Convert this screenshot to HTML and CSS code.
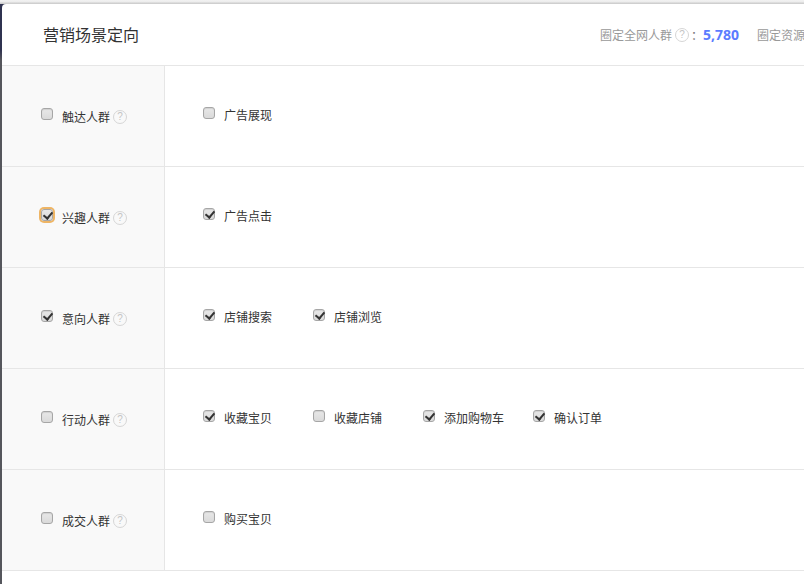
FILE: index.html
```html
<!DOCTYPE html>
<html lang="zh-CN">
<head>
  <meta charset="UTF-8">
  <title>营销场景定向</title>
  <link rel="stylesheet" href="styles.css">
</head>
<body>

<div class="modal">
  <div class="modal-head">
    <h2>营销场景定向</h2>
    <div class="stats">
      <span class="stat">圈定全网人群<i class="help">?</i><span class="colon">：</span><b>5,780</b></span>
      <span class="stat">圈定资源位人群</span>
    </div>
  </div>

  <div class="row">
    <div class="row-left">
      <label class="item"><span class="box"></span>触达人群</label><i class="help">?</i>
    </div>
    <div class="row-right">
      <label class="item"><span class="box"></span>广告展现</label>
    </div>
  </div>

  <div class="row">
    <div class="row-left">
      <label class="item"><span class="box checked focus"></span>兴趣人群</label><i class="help">?</i>
    </div>
    <div class="row-right">
      <label class="item"><span class="box checked"></span>广告点击</label>
    </div>
  </div>

  <div class="row">
    <div class="row-left">
      <label class="item"><span class="box checked"></span>意向人群</label><i class="help">?</i>
    </div>
    <div class="row-right">
      <label class="item"><span class="box checked"></span>店铺搜索</label>
      <label class="item"><span class="box checked"></span>店铺浏览</label>
    </div>
  </div>

  <div class="row">
    <div class="row-left">
      <label class="item"><span class="box"></span>行动人群</label><i class="help">?</i>
    </div>
    <div class="row-right">
      <label class="item"><span class="box checked"></span>收藏宝贝</label>
      <label class="item"><span class="box"></span>收藏店铺</label>
      <label class="item"><span class="box checked"></span>添加购物车</label>
      <label class="item"><span class="box checked"></span>确认订单</label>
    </div>
  </div>

  <div class="row">
    <div class="row-left">
      <label class="item"><span class="box"></span>成交人群</label><i class="help">?</i>
    </div>
    <div class="row-right">
      <label class="item"><span class="box"></span>购买宝贝</label>
    </div>
  </div>
</div>

</body>
</html>
```

FILE: styles.css
```css
* { margin: 0; padding: 0; box-sizing: border-box; }
html, body { width: 804px; height: 584px; overflow: hidden; }
body { background: linear-gradient(#2f3350 0, #2f3350 50px, #55565c 60px); padding: 4px 0 0 2px; font-family: "Liberation Sans", "Noto Sans CJK SC", sans-serif; font-size: 12px; color: #333; position: relative; }
body::before { content: ""; position: absolute; top: 0; left: 0; right: 0; height: 4px; background: linear-gradient(#f2f2f2 0, #ececec 2px, #cfcfcf 3px, #cfcfcf 4px); }

.modal { background: #fff; height: 580px; width: 802px; border-top-left-radius: 4px; overflow: hidden; }

.modal-head { height: 62px; border-bottom: 1px solid #e6e6e6; display: flex; justify-content: space-between; align-items: center; padding-left: 41px; white-space: nowrap; }
.modal-head h2 { font-size: 16px; font-weight: normal; color: #333; margin-top: -1px; }
.stats { display: flex; gap: 18px; color: #999; width: 204px; flex-shrink: 0; overflow: hidden; }
.stat { display: flex; align-items: center; flex-shrink: 0; }
.stat b { color: #5b7cff; font-size: 14px; font-family: "Open Sans", sans-serif; }
.colon { margin-left: 2px; color: #777; }

.row { display: flex; height: 101px; border-bottom: 1px solid #e6e6e6; }
.row-left { width: 163px; flex-shrink: 0; background: #f9f9f9; border-right: 1px solid #e6e6e6; display: flex; align-items: center; padding-left: 39px; }
.row-right { flex: 1; display: flex; align-items: center; padding-left: 38px; padding-bottom: 3px; }
.row-right .item { width: 110px; }

.item { display: flex; align-items: center; color: #333; white-space: nowrap; }
.box { width: 12px; height: 12px; margin-right: 9px; margin-top: -3px; border: 1px solid #a6a6a6; border-radius: 3px; background: linear-gradient(#e8e8e8, #dadada); box-shadow: inset 0 1px 1px rgba(0,0,0,0.1); position: relative; flex-shrink: 0; }
.row-left .box { margin-top: -5px; }
.box.checked::after { content: ""; position: absolute; left: 3px; top: 0; width: 4px; height: 7px; border: solid #333; border-width: 0 2px 2px 0; transform: rotate(40deg); }
.box.focus { box-shadow: 0 0 0 2px #eeb565; }

.help { display: inline-block; width: 14px; height: 14px; margin-left: 3px; margin-top: 2px; border: 1px solid #d6d6d6; border-radius: 50%; color: #c4c4c4; font-style: normal; font-size: 10px; line-height: 12px; text-align: center; background: #fff; }
.stat .help { margin-top: 1px; }
.row-left .help { background: transparent; }
```
